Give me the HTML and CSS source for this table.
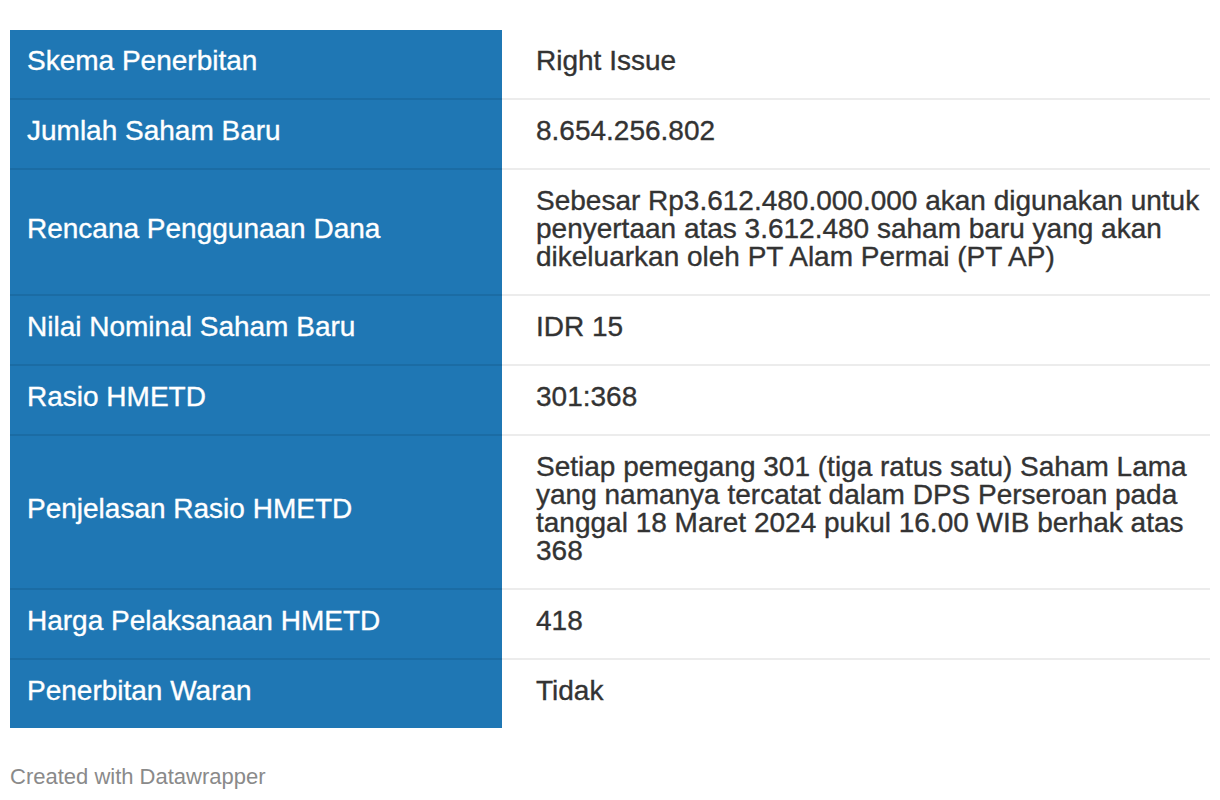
FILE: index.html
```html
<!DOCTYPE html>
<html>
<head>
<meta charset="utf-8">
<link rel="stylesheet" href="styles.css">
</head>
<body>
<div class="wrap">
  <table class="tbl">
    <tbody>
      <tr><th>Skema Penerbitan</th><td>Right Issue</td></tr>
      <tr><th>Jumlah Saham Baru</th><td>8.654.256.802</td></tr>
      <tr><th>Rencana Penggunaan Dana</th><td>Sebesar Rp3.612.480.000.000 akan digunakan untuk penyertaan atas 3.612.480 saham baru yang akan dikeluarkan oleh PT Alam Permai (PT AP)</td></tr>
      <tr><th>Nilai Nominal Saham Baru</th><td>IDR 15</td></tr>
      <tr><th>Rasio HMETD</th><td>301:368</td></tr>
      <tr><th>Penjelasan Rasio HMETD</th><td>Setiap pemegang 301 (tiga ratus satu) Saham Lama yang namanya tercatat dalam DPS Perseroan pada tanggal 18 Maret 2024 pukul 16.00 WIB berhak atas 368</td></tr>
      <tr><th>Harga Pelaksanaan HMETD</th><td>418</td></tr>
      <tr><th>Penerbitan Waran</th><td>Tidak</td></tr>
    </tbody>
  </table>
  <div class="footer">Created with Datawrapper</div>
</div>
</body>
</html>
```
FILE: styles.css
```css
html, body {
  margin: 0;
  padding: 0;
  background: #ffffff;
}
.wrap {
  padding: 30px 10px 0 10px;
  font-family: "Liberation Sans", Arial, Helvetica, sans-serif;
}
.tbl {
  width: 1200px;
  border-collapse: collapse;
  table-layout: fixed;
}
.tbl th, .tbl td {
  font-size: 28px;
  line-height: 28px;
  font-weight: normal;
  text-align: left;
  vertical-align: middle;
  padding: 17px 0 23px 0;
  border-bottom: 2px solid #ececec;
  -webkit-text-stroke: 0.35px currentColor;
}
.tbl th {
  width: 475px;
  padding-left: 17px;
  background: #1f77b4;
  color: #ffffff;
  border-bottom-color: #1b6ca4;
}
.tbl td {
  padding-left: 34px;
  padding-right: 6px;
  color: #333333;
}
.tbl tr:last-child th, .tbl tr:last-child td {
  border-bottom: none;
}
.footer {
  margin-top: 36px;
  font-size: 22px;
  color: #8a8a8a;
}
```
